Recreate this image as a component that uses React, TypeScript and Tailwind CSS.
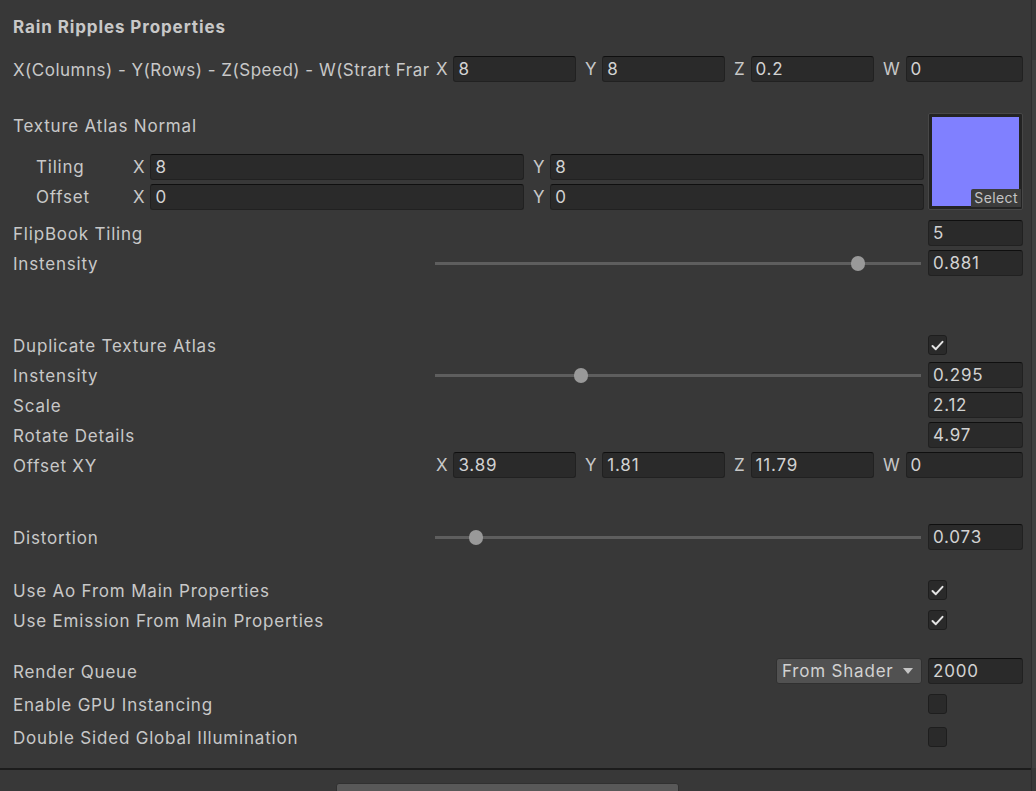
import React from 'react';

interface FieldProps {
    value: string;
    className?: string;
}

function Field(props: FieldProps) {
    return (
        <div className={'h-[26px] rounded-[3px] bg-[#2a2a2a] border border-[#212121] border-t-[#0f0f0f] flex items-center pl-[4px] pt-[2px] text-[#d2d2d2] overflow-hidden whitespace-nowrap ' + (props.className ?? '')}>
            {props.value}
        </div>
    );
}

function VecItem({ axis, value }: { axis: string, value: string }) {
    return (
        <div className="flex items-center min-w-0">
            <span className="pr-[5px] pt-[2px]">{axis}</span>
            <Field value={value} className="flex-1 min-w-0" />
        </div>
    );
}

function Vector4({ values }: { values: string[] }) {
    const axes = ['X', 'Y', 'Z', 'W'];
    return (
        <div className="grid grid-cols-4 gap-[9px] flex-1 pl-[1px]">
            {values.map((v, i) => <VecItem key={axes[i]} axis={axes[i]} value={v} />)}
        </div>
    );
}

function Checkbox({ checked }: { checked: boolean }) {
    return (
        <div className="w-[19px] h-[20px] rounded-[3px] bg-[#2a2a2a] border border-[#1e1e1e] flex items-center justify-center">
            {checked && (
                <svg width="13" height="11" viewBox="0 0 13 11">
                    <path d="M1.5 6 L4.8 9.2 L11.5 1.8" fill="none" stroke="#e4e4e4" strokeWidth="2" strokeLinecap="round" strokeLinejoin="round" />
                </svg>
            )}
        </div>
    );
}

function Slider({ value }: { value: number }) {
    const left = 7 + value * (486 - 14);
    return (
        <div className="relative w-[486px] h-[30px] flex items-center shrink-0">
            <div className="w-full h-[3px] bg-[#5e5e5e]"></div>
            <div className="absolute w-[14px] h-[15px] rounded-full bg-[#999999] -translate-x-1/2" style={{ left: left }}></div>
        </div>
    );
}

function Row({ label, children, className }: { label: string, children?: React.ReactNode, className?: string }) {
    return (
        <div className={'h-[30px] shrink-0 flex items-center ' + (className ?? '')}>
            <span className="w-[422px] pt-[3px] shrink-0 whitespace-nowrap overflow-hidden">{label}</span>
            <div className="flex-1 flex items-center justify-end">{children}</div>
        </div>
    );
}

function FloatRow({ label, value, className }: { label: string, value: string, className?: string }) {
    return (
        <Row label={label} className={className}>
            <Field value={value} className="w-[95px]" />
        </Row>
    );
}

function SliderRow({ label, value, text, className }: { label: string, value: number, text: string, className?: string }) {
    return (
        <Row label={label} className={className}>
            <Slider value={value} />
            <div className="w-[7px]"></div>
            <Field value={text} className="w-[95px]" />
        </Row>
    );
}

function ToggleRow({ label, checked, className }: { label: string, checked: boolean, className?: string }) {
    return (
        <Row label={label} className={className}>
            <div className="w-[95px] flex">
                <Checkbox checked={checked} />
            </div>
        </Row>
    );
}

export default function App() {
    return (
        <div className="w-[1036px] h-[791px] bg-[#383838] overflow-hidden flex text-[17px] tracking-[0.8px] text-[#c8c8c8] font-['Inter',sans-serif]">
            <div className="w-[1031px] flex flex-col overflow-hidden">
                <div className="flex flex-col shrink-0 pl-[13px] pr-[8px] pt-[11px]">
                    <div className="h-[30px] flex items-center pt-[3px] font-bold tracking-[0.9px]">Rain Ripples Properties</div>

                    <div className="h-[30px] flex items-center mt-[13px]">
                        <span className="w-[422px] pt-[3px] shrink-0 whitespace-nowrap overflow-hidden tracking-[0.5px]">X(Columns) - Y(Rows) - Z(Speed) - W(Strart Frar</span>
                        <Vector4 values={['8', '8', '0.2', '0']} />
                    </div>

                    <div className="flex mt-[26px]">
                        <div className="flex-1 flex flex-col">
                            <div className="h-[30px] flex items-center pt-[3px]">Texture Atlas Normal</div>
                            <div className="h-[30px] flex items-center mt-[12px]">
                                <span className="w-[120px] pl-[23px] pt-[2px] shrink-0">Tiling</span>
                                <div className="grid grid-cols-2 gap-[9px] flex-1">
                                    <VecItem axis="X" value="8" />
                                    <VecItem axis="Y" value="8" />
                                </div>
                            </div>
                            <div className="h-[30px] flex items-center">
                                <span className="w-[120px] pl-[23px] pt-[2px] shrink-0">Offset</span>
                                <div className="grid grid-cols-2 gap-[9px] flex-1">
                                    <VecItem axis="X" value="0" />
                                    <VecItem axis="Y" value="0" />
                                </div>
                            </div>
                        </div>
                        <div className="w-[95px] ml-[4px] mt-[3px] h-[97px] relative rounded-[2px] border border-[#474747] bg-[#232323] p-[3px]">
                            <div className="w-full h-full bg-[#8080ff]"></div>
                            <div className="absolute right-[1px] bottom-[2px] h-[18px] px-[3px] bg-[#3c3c3c] text-[14px] tracking-[0.4px] leading-[18px] text-[#c4c4c4] rounded-tl-[2px]">Select</div>
                        </div>
                    </div>

                    <FloatRow label="FlipBook Tiling" value="5" className="mt-[6px]" />
                    <SliderRow label="Instensity" value={0.881} text="0.881" />

                    <ToggleRow label="Duplicate Texture Atlas" checked={true} className="mt-[52px]" />
                    <SliderRow label="Instensity" value={0.295} text="0.295" />
                    <FloatRow label="Scale" value="2.12" />
                    <FloatRow label="Rotate Details" value="4.97" />
                    <div className="h-[30px] flex items-center">
                        <span className="w-[422px] pt-[3px] shrink-0">Offset XY</span>
                        <Vector4 values={['3.89', '1.81', '11.79', '0']} />
                    </div>

                    <SliderRow label="Distortion" value={0.073} text="0.073" className="mt-[42px]" />

                    <ToggleRow label="Use Ao From Main Properties" checked={true} className="mt-[23px]" />
                    <ToggleRow label="Use Emission From Main Properties" checked={true} />

                    <Row label="Render Queue" className="mt-[21px]">
                        <div className="w-[146px] h-[26px] rounded-[3px] bg-[#515151] border border-[#303030] flex items-center justify-between pl-[5px] pr-[8px] text-[#d2d2d2]">
                            <span className="pt-[2px]">From Shader</span>
                            <svg width="10" height="6" viewBox="0 0 10 6">
                                <path d="M0 0 L10 0 L5 6 Z" fill="#c4c4c4" />
                            </svg>
                        </div>
                        <div className="w-[6px]"></div>
                        <Field value="2000" className="w-[95px]" />
                    </Row>
                    <ToggleRow label="Enable GPU Instancing" checked={false} className="mt-[3px]" />
                    <ToggleRow label="Double Sided Global Illumination" checked={false} className="mt-[3px]" />
                </div>

                <div className="h-[2px] shrink-0 bg-[#1c1c1c] mt-[16px]"></div>
                <div className="flex shrink-0 mt-[13px]">
                    <div className="w-[343px] h-[20px] ml-[336px] rounded-t-[3px] bg-[#585858] border border-[#303030]"></div>
                </div>
            </div>
            <div className="w-[5px] flex flex-col border-l border-[#2e2e2e]">
                <div className="h-[60px] shrink-0"></div>
                <div className="h-[708px] shrink-0 bg-[#404040]"></div>
            </div>
        </div>
    );
}
